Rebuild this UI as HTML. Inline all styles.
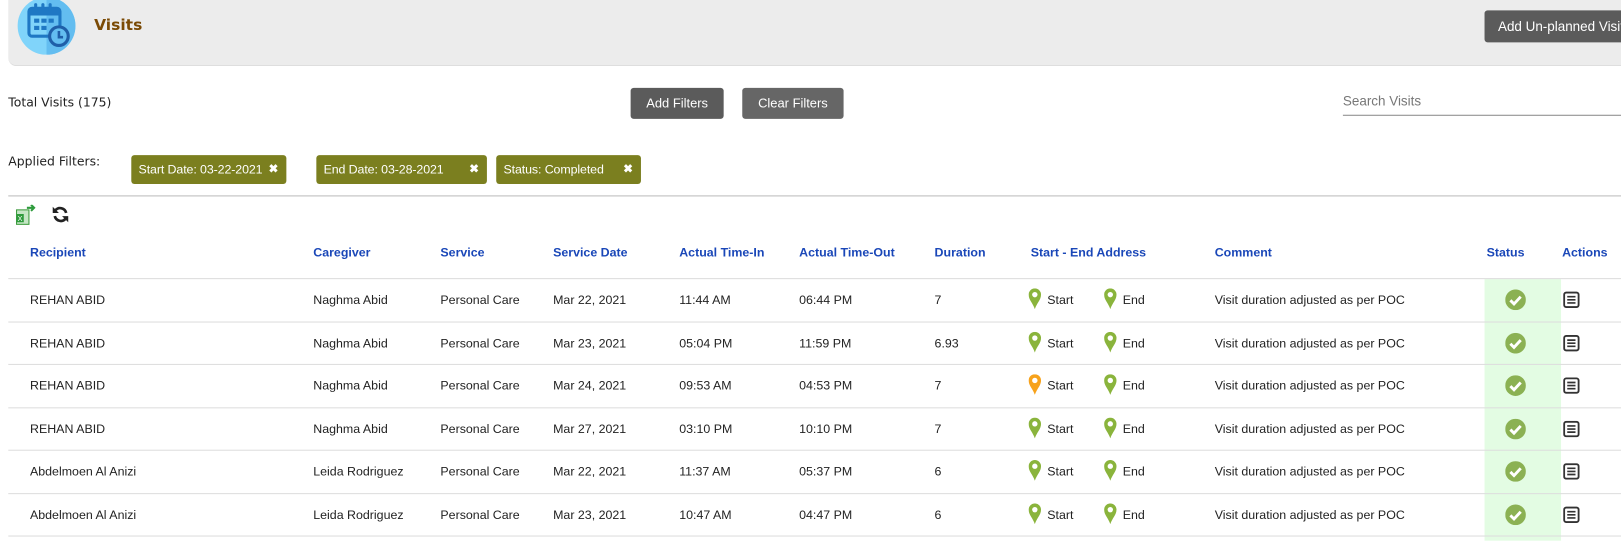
<!DOCTYPE html>
<html><head><meta charset="utf-8"><style>
html,body{margin:0;padding:0;background:#fff;overflow:hidden;width:1621px;height:540px}
#w{position:absolute;left:0;top:0;width:1568px;height:523px;transform:scale(1.0338);transform-origin:0 0;font-family:"Liberation Sans",Arial,sans-serif;}
.a{position:absolute;white-space:nowrap}
.hdr{position:absolute;left:8px;top:-2px;width:1600px;height:65px;background:#ececec;border-radius:0 0 0 8px;border-bottom:1px solid #ddd}
.btn{position:absolute;background:#5b5b5b;color:#fff;font-size:13px;border-radius:3px;text-align:center;}
.chip{position:absolute;top:150px;height:28px;line-height:28px;background:#7b7f1f;color:#fff;font-family:"Liberation Sans",sans-serif;font-size:12px;letter-spacing:-0.1px;border-radius:3px;padding-left:7px}
.chip b{position:absolute;right:8px;top:0;font-size:11px}
.th{position:absolute;top:237px;color:#1a47b8;font-weight:bold;font-size:12px}
.line{position:absolute;left:8px;width:1560px;height:1px;background:#ddd}
.td{position:absolute;font-size:12px;color:#222}
</style></head><body><div id="w">
<div class="hdr"></div>
<svg class="a" style="left:17px;top:-3px" width="56" height="56" viewBox="0 0 56 56">
<circle cx="28" cy="28" r="28" fill="#80d4fa"/>
<path d="M28 0A28 28 0 0 1 28 56Z" fill="#63bdf0"/>
<rect x="11" y="11" width="30" height="27" rx="3" fill="none" stroke="#1f78c4" stroke-width="3"/>
<rect x="11" y="11" width="30" height="7" fill="#1f78c4"/>
<g fill="#1f78c4"><rect x="16" y="6" width="3" height="8" rx="1.5"/><rect x="23" y="6" width="3" height="8" rx="1.5"/><rect x="30" y="6" width="3" height="8" rx="1.5"/>
<rect x="16" y="21" width="5" height="4"/><rect x="23" y="21" width="5" height="4"/><rect x="30" y="21" width="5" height="4"/><rect x="16" y="28" width="5" height="4"/><rect x="23" y="28" width="5" height="4"/></g>
<circle cx="40" cy="38" r="9" fill="#63bdf0" stroke="#1f5fa8" stroke-width="3"/>
<path d="M40 33v6h4" stroke="#1f5fa8" stroke-width="2.5" fill="none"/></svg>
<div class="a" style="left:91px;top:15px;font-family:'DejaVu Sans',sans-serif;font-weight:bold;font-size:15px;color:#7a4a05">Visits</div>
<div class="btn" style="left:1436px;top:10px;width:150px;height:31px;line-height:31px;text-align:left;padding-left:13px">Add Un-planned Visit</div>
<div class="a" style="left:8px;top:92px;font-family:'DejaVu Sans',sans-serif;font-size:12px;color:#222">Total Visits (175)</div>
<div class="btn" style="left:610px;top:85px;width:90px;height:30px;line-height:30px;font-size:12.5px">Add Filters</div>
<div class="btn" style="left:718px;top:85px;width:98px;height:30px;line-height:30px;font-size:12.5px;background:#666">Clear Filters</div>
<div class="a" style="left:1299px;top:90px;font-size:13px;color:#777">Search Visits</div>
<div class="a" style="left:1299px;top:111px;width:280px;height:1px;background:#888"></div>
<div class="a" style="left:8px;top:149px;font-family:'DejaVu Sans',sans-serif;font-size:12px;color:#222">Applied Filters:</div>
<div class="chip" style="left:127px;width:143px">Start Date: 03-22-2021<b>✖</b></div>
<div class="chip" style="left:306px;width:158px">End Date: 03-28-2021<b>✖</b></div>
<div class="chip" style="left:480px;width:133px">Status: Completed<b>✖</b></div>
<div class="a" style="left:8px;top:189px;width:1560px;height:1px;background:#bbb"></div>
<svg class="a" style="left:14px;top:198px" width="22" height="20" viewBox="0 0 22 20"><rect x="2" y="5" width="12" height="14" fill="#c5e6c5" stroke="#3a9a3a"/><rect x="2" y="9" width="7" height="8" fill="#2e9b3c"/><text x="3" y="16" font-size="7" fill="#fff" font-family="Liberation Sans">X</text><path d="M12 3h7M16 0l3 3-3 3" stroke="#2e9b3c" stroke-width="2" fill="none"/></svg>
<svg class="a" style="left:50px;top:199px" width="17" height="17" viewBox="0 0 17 17"><path d="M14 7A6 6 0 0 0 3.5 4.5M3 10a6 6 0 0 0 10.5 2.5" stroke="#222" stroke-width="2.6" fill="none"/><path d="M1 1v6h6z M16 16v-6h-6z" fill="#222"/></svg>
<div class="th" style="left:29px">Recipient</div><div class="th" style="left:303px">Caregiver</div><div class="th" style="left:426px">Service</div><div class="th" style="left:535px">Service Date</div><div class="th" style="left:657px">Actual Time-In</div><div class="th" style="left:773px">Actual Time-Out</div><div class="th" style="left:904px">Duration</div><div class="th" style="left:997px">Start - End Address</div><div class="th" style="left:1175px">Comment</div><div class="th" style="left:1438px">Status</div><div class="th" style="left:1511px">Actions</div>
<div class="a" style="left:1436px;top:270px;width:74px;height:253px;background:#e3fce3"></div>
<div id="rows"></div>
</div>
<script>
var d=[["REHAN ABID","Naghma Abid","Mar 22, 2021","11:44 AM","06:44 PM","7",0],["REHAN ABID","Naghma Abid","Mar 23, 2021","05:04 PM","11:59 PM","6.93",0],["REHAN ABID","Naghma Abid","Mar 24, 2021","09:53 AM","04:53 PM","7",1],["REHAN ABID","Naghma Abid","Mar 27, 2021","03:10 PM","10:10 PM","7",0],["Abdelmoen Al Anizi","Leida Rodriguez","Mar 22, 2021","11:37 AM","05:37 PM","6",0],["Abdelmoen Al Anizi","Leida Rodriguez","Mar 23, 2021","10:47 AM","04:47 PM","6",0]];
function pin(c){return '<svg width="12" height="20" viewBox="0 0 12 20"><path d="M6 20C4 14 0 11 0 6a6 6 0 0 1 12 0c0 5-4 8-6 14z" fill="'+c+'"/><circle cx="6" cy="6" r="2.6" fill="#fff"/></svg>';}
var h='<div class="line" style="top:269px"></div>';
d.forEach(function(r,i){var y=269+i*41.5;var t=y+14;
h+='<div class="td" style="left:29px;top:'+t+'px">'+r[0]+'</div><div class="td" style="left:303px;top:'+t+'px">'+r[1]+'</div><div class="td" style="left:426px;top:'+t+'px">Personal Care</div><div class="td" style="left:535px;top:'+t+'px">'+r[2]+'</div><div class="td" style="left:657px;top:'+t+'px">'+r[3]+'</div><div class="td" style="left:773px;top:'+t+'px">'+r[4]+'</div><div class="td" style="left:904px;top:'+t+'px">'+r[5]+'</div>';
h+='<div class="a" style="left:995px;top:'+(y+10)+'px">'+pin(r[6]?'#f7a21b':'#8ab43c')+'</div><div class="td" style="left:1013px;top:'+t+'px">Start</div>';
h+='<div class="a" style="left:1068px;top:'+(y+10)+'px">'+pin('#8ab43c')+'</div><div class="td" style="left:1086px;top:'+t+'px">End</div>';
h+='<div class="td" style="left:1175px;top:'+t+'px">Visit duration adjusted as per POC</div>';
h+='<svg class="a" style="left:1456px;top:'+(y+11)+'px" width="20" height="20" viewBox="0 0 20 20"><circle cx="10" cy="10" r="10" fill="#8bb153"/><path d="M5 10.5l3.5 3.5 6.5-7" stroke="#fff" stroke-width="2.8" fill="none"/></svg>';
h+='<svg class="a" style="left:1512px;top:'+(y+13)+'px" width="16" height="16" viewBox="0 0 16 16"><rect x="1" y="1" width="14" height="14" rx="2" fill="none" stroke="#333" stroke-width="1.8"/><path d="M4 5h8M4 8h8M4 11h8" stroke="#333" stroke-width="1.6"/></svg>';
h+='<div class="line" style="top:'+(y+41.5)+'px"></div>';});
document.getElementById('rows').innerHTML=h;
</script>
</body></html>
